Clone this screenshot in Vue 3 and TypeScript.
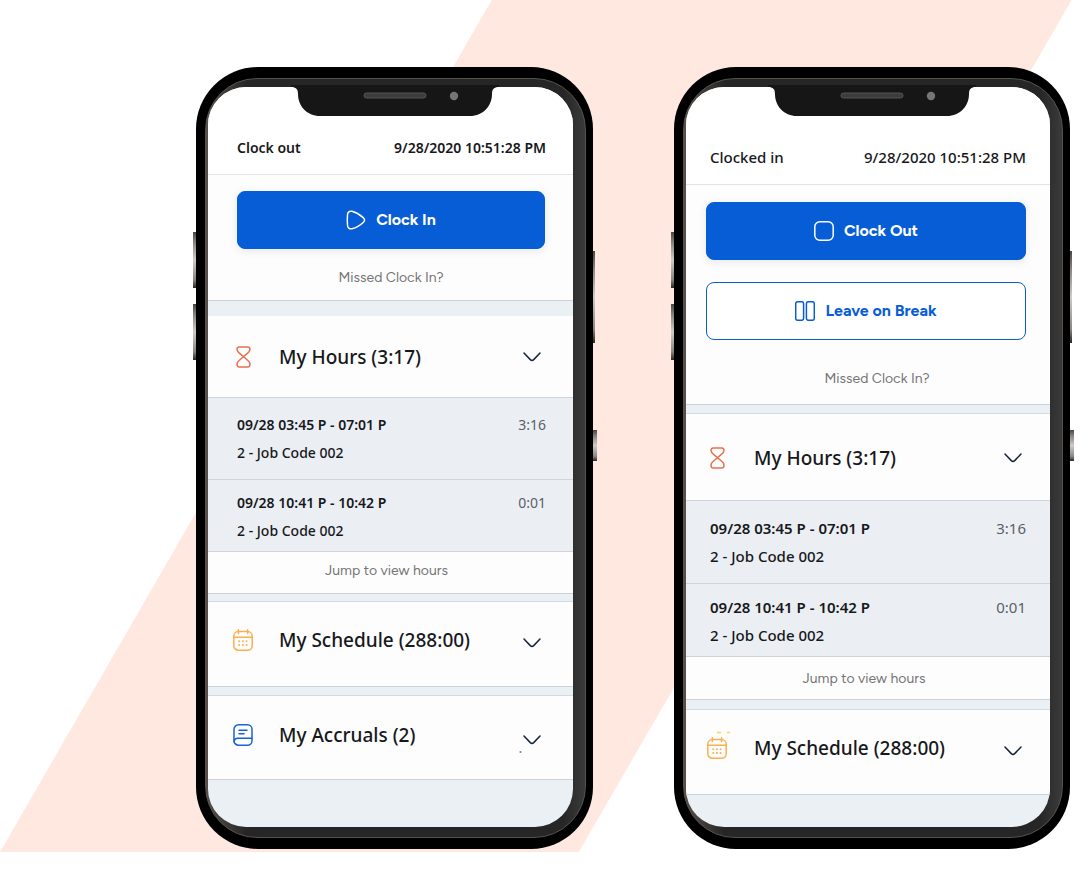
<script setup lang="ts">
import { reactive } from 'vue'

type IconName = 'hourglass' | 'calendar' | 'book'

interface Entry {
  span: string
  job: string
  total: string
}

interface Section {
  id: string
  icon: IconName
  title: string
  open: boolean
  entries: Entry[]
}

interface Phone {
  id: string
  status: string
  stamp: string
  action: string
  canBreak: boolean
  sections: Section[]
}

const entries: Entry[] = [
  { span: '09/28 03:45 P - 07:01 P', job: '2 - Job Code 002', total: '3:16' },
  { span: '09/28 10:41 P - 10:42 P', job: '2 - Job Code 002', total: '0:01' },
]

const hours = (): Section => ({ id: 'hours', icon: 'hourglass', title: 'My Hours (3:17)', open: true, entries })
const schedule = (): Section => ({ id: 'schedule', icon: 'calendar', title: 'My Schedule (288:00)', open: false, entries: [] })
const accruals = (): Section => ({ id: 'accruals', icon: 'book', title: 'My Accruals (2)', open: false, entries: [] })

const phones = reactive<Phone[]>([
  {
    id: 'out',
    status: 'Clock out',
    stamp: '9/28/2020 10:51:28 PM',
    action: 'Clock In',
    canBreak: false,
    sections: [hours(), schedule(), accruals()],
  },
  {
    id: 'in',
    status: 'Clocked in',
    stamp: '9/28/2020 10:51:28 PM',
    action: 'Clock Out',
    canBreak: true,
    sections: [hours(), schedule()],
  },
])
</script>

<template>
  <main class="page">
    <div v-for="phone in phones" :key="phone.id" class="phone" :class="'phone-' + phone.id">
      <i class="key key-up"></i>
      <i class="key key-down"></i>
      <i class="key key-power"></i>
      <i class="key key-side"></i>
      <div class="bezel">
        <svg class="notch" width="208" height="38" viewBox="0 0 208 38" aria-hidden="true">
          <path d="M0 6H208V8C203 8 201 10 201 15C201 27 192 37 179 37H29C16 37 7 27 7 15C7 10 5 8 0 8Z" fill="#161616" />
          <rect x="73" y="14" width="62" height="5" rx="2.5" fill="#3c3c3c" stroke="#555" stroke-width="1" />
          <circle cx="163" cy="17" r="4.2" fill="#757575" />
        </svg>
        <div class="screen">
          <header class="status">
            <span>{{ phone.status }}</span>
            <time>{{ phone.stamp }}</time>
          </header>

          <section class="actions">
            <button type="button" class="btn primary">
              <svg v-if="!phone.canBreak" width="20" height="20" viewBox="0 0 20 20" aria-hidden="true">
                <path d="M1.500 5C1.500 2.200 3.400.7 6 1.300C9.600 2.200 14.400 5 17.200 7.600C19 9.200 19 10.900 17.200 12.500C14.400 15.200 9.600 17.900 6 18.700C3.400 19.300 1.500 17.800 1.500 15C1.200 11.700 1.200 8.300 1.500 5Z" />
              </svg>
              <svg v-else width="20" height="20" viewBox="0 0 20 20" aria-hidden="true">
                <rect x="0.8" y="0.8" width="18.400" height="18.400" rx="5" />
              </svg>
              {{ phone.action }}
            </button>
            <button v-if="phone.canBreak" type="button" class="btn outline">
              <svg width="20" height="20" viewBox="0 0 20 20" aria-hidden="true">
                <rect x="0.700" y="0.700" width="7.900" height="18.600" rx="2" />
                <rect x="11.400" y="0.700" width="7.900" height="18.600" rx="2" />
              </svg>
              Leave on Break
            </button>
            <a class="missed" href="#missed">Missed Clock In?</a>
          </section>

          <section v-for="section in phone.sections" :key="section.id" class="card" :class="section.id">
            <button type="button" class="head" :aria-expanded="section.open" @click="section.open = !section.open">
              <span class="label">
                <span class="icon">
                  <svg v-if="section.icon === 'hourglass'" width="15" height="22" viewBox="0 0 15 22" stroke="#e5714f" aria-hidden="true">
                    <path d="M3.200 1h8.600c1.400 0 2.400 1 2.200 2.400-.2 1.600-1.200 3-2.600 4L3.600 14c-1.500 1.100-2.500 2.600-2.600 4.200C.9 19.800 1.800 21 3.200 21h8.600c1.400 0 2.300-1.200 2.200-2.800-.1-1.600-1.100-3.100-2.600-4.200L3.600 7.400c-1.400-1-2.400-2.400-2.600-4C.8 2 1.800 1 3.200 1z" />
                  </svg>
                  <svg v-else-if="section.icon === 'calendar'" width="20" height="22" viewBox="0 0 20 22" stroke="#f9b04f" aria-hidden="true">
                    <rect x="0.800" y="2.600" width="18.400" height="18.600" rx="4.500" />
                    <path d="M1 8.200H19M5.400.8V4.400M14.600.8V4.400" stroke-linecap="round" />
                    <path d="M6.200 12.300h.01M9.900 12.300h.01M13.600 12.300h.01M6.200 16h.01M9.900 16h.01M13.600 16h.01" stroke-linecap="round" stroke-width="2" />
                    <path v-if="phone.canBreak" d="M10 -4.500h4M20 -4.500h3" stroke="#fbdc3a" />
                  </svg>
                  <svg v-else width="20" height="22" viewBox="0 0 20 22" stroke="#1a62d6" aria-hidden="true">
                    <rect x="1" y="0.800" width="18" height="20.400" rx="4.500" />
                    <path d="M6 6.200H14M6 9.800H11M1 17.500C1.300 15.400 2.600 14.200 4.600 14.200H19" stroke-linecap="round" />
                  </svg>
                </span>
                <span class="title">{{ section.title }}</span>
              </span>
              <svg class="chevron" width="18" height="10" viewBox="0 0 18 10" aria-hidden="true">
                <path d="M1 1L7.300 7.600Q9 9.200 10.700 7.600L17 1" />
                <path v-if="section.id === 'accruals'" d="M-3 17h1" stroke-width="1" />
              </svg>
            </button>
            <template v-if="section.open">
              <div v-for="entry in section.entries" :key="entry.span" class="entry">
                <div>
                  <div class="span">{{ entry.span }}</div>
                  <div class="job">{{ entry.job }}</div>
                </div>
                <span class="total">{{ entry.total }}</span>
              </div>
              <a class="jump" href="#hours">Jump to view hours</a>
            </template>
          </section>
        </div>
      </div>
    </div>
  </main>
</template>

<style>
body {
  margin: 0;
  background: #fff;
}
</style>

<style scoped>
.page {
  position: relative;
  z-index: 0;
  box-sizing: border-box;
  min-height: 100vh;
  padding: 67px 0 35px;
  display: grid;
  grid-template-columns: 196fr 397fr 81fr 396fr 18fr;
  align-items: stretch;
  overflow: hidden;
  color: #17181b;
  font-family: "Noto Sans", "Open Sans", sans-serif;
}

.page::before {
  content: "";
  position: absolute;
  z-index: -1;
  inset: 0 0 32px;
  background: #ffe8e0;
  clip-path: polygon(45.2% 0, 98.5% 0, 53.2% 100%, 0 100%);
}

.phone {
  position: relative;
  display: flex;
  box-sizing: border-box;
  padding: 11px 7px 11px 9px;
  border-radius: 62px;
  background: #000;
}

.phone-out {
  grid-column: 2;
  --inset: 29px;
  --edge: 27px;
  --status-top: 51px;
  --status-end: 16px;
  --entry-end: 16px;
  --last-end: 10px;
  --text: 14px;
  --stamp-weight: 600;
}

.phone-in {
  grid-column: 4;
  --inset: 24px;
  --edge: 24px;
  --status-top: 60px;
  --status-end: 17px;
  --entry-end: 17px;
  --last-end: 11px;
  --text: 15px;
  --stamp-weight: 500;
}

.key {
  position: absolute;
  z-index: -1;
  width: 8px;
  background: linear-gradient(#4b4643, #8a8683 20%, #cfcbc8 50%, #8a8683 85%, #2a2624);
}

.key-up {
  left: -3px;
  top: 165px;
  height: 56px;
}

.key-down {
  left: -3px;
  top: 237px;
  height: 56px;
}

.key-power {
  right: -2px;
  top: 184px;
  height: 92px;
}

.key-side {
  right: -4px;
  top: 363px;
  height: 31px;
}

.bezel {
  position: relative;
  flex: 1;
  min-width: 0;
  display: flex;
  box-sizing: border-box;
  padding: 8px 12px 10px 2px;
  border: 1px solid #55524f;
  border-radius: 52px;
  background: linear-gradient(90deg, #5a504a 0, #262626 40px, #262626 94%, #3a3a3a);
}

.notch {
  position: absolute;
  top: 0;
  left: 50%;
  margin-left: -105px;
  pointer-events: none;
}

.screen {
  flex: 1;
  min-width: 0;
  border-radius: 38px;
  overflow: hidden;
  background: #ebf0f5;
}

.status {
  display: flex;
  justify-content: space-between;
  padding: var(--status-top) var(--edge) var(--status-end) var(--inset);
  border-bottom: 1px solid #e2e4e6;
  background: #fff;
  font-size: var(--text);
  line-height: 20px;
  font-weight: var(--stamp-weight);
}

.actions {
  display: flex;
  flex-direction: column;
  padding: 16px 28px 12px 29px;
  border-bottom: 1px solid #cdd2d8;
  background: #fdfdfe;
}

.phone-in .actions {
  padding: 17px 24px 15px 20px;
}

.btn {
  box-sizing: border-box;
  display: flex;
  align-items: center;
  justify-content: center;
  gap: 10px;
  padding: 18px;
  border: 1px solid #075dd5;
  border-radius: 8px;
  font-family: Figtree, Inter, sans-serif;
  font-size: 16px;
  line-height: 20px;
  font-weight: 700;
  cursor: pointer;
}

.btn svg {
  fill: none;
  stroke: currentColor;
  stroke-width: 1.5;
}

.primary {
  background: #075dd5;
  color: #fff;
  box-shadow: 0 2px 8px rgba(60, 40, 30, 0.1);
}

.outline {
  margin-top: 22px;
  background: #fff;
  color: #075dd5;
}

.missed,
.jump {
  color: #747474;
  font-family: Figtree, Inter, sans-serif;
  font-size: 14px;
  line-height: 20px;
  text-align: center;
  text-decoration: none;
}

.missed {
  margin-top: 19px;
}

.phone-in .missed {
  margin-top: 29px;
  padding-left: 22px;
}

.card {
  margin-top: 7px;
  border-top: 1px solid #d3dae2;
  border-bottom: 1px solid #cdd2d8;
  background: #fdfdfe;
}

.card.accruals,
.phone-in .card {
  margin-top: 8px;
}

.phone-out .card.hours {
  margin-top: 14px;
  border-top-color: #ebf0f5;
}

.phone-in .card.schedule {
  margin-top: 9px;
}

.head {
  box-sizing: border-box;
  width: 100%;
  display: flex;
  align-items: center;
  justify-content: space-between;
  padding: 24px 32px 26px 25px;
  border: 0;
  background: none;
  color: inherit;
  font: inherit;
  text-align: left;
  cursor: pointer;
}

.phone-in .head {
  padding-left: 21px;
  padding-right: 28px;
}

.accruals .head {
  padding-top: 25px;
  padding-bottom: 20px;
}

.hours .head {
  padding-top: 27px;
  padding-bottom: 26px;
}

.phone-in .hours .head {
  padding-top: 30px;
  padding-bottom: 28px;
}

.label {
  display: flex;
  align-items: center;
  gap: 26px;
  padding-bottom: 6px;
}

.phone-in .label {
  gap: 27px;
}

.accruals .label {
  padding-bottom: 10px;
}

.hours .label {
  padding-bottom: 0;
}

.icon {
  width: 20px;
  display: flex;
  justify-content: center;
}

.icon svg {
  fill: none;
  stroke-width: 1.5;
  overflow: visible;
}

.title {
  font-size: 19px;
  line-height: 28px;
  font-weight: 500;
}

.chevron {
  fill: none;
  stroke: #14233a;
  stroke-width: 1.5;
  stroke-linecap: round;
  overflow: visible;
}

.entry {
  display: flex;
  justify-content: space-between;
  padding: 13px var(--edge) var(--last-end) var(--inset);
  border-top: 1px solid #cfd4db;
  background: #ebeff4;
  font-size: var(--text);
  line-height: 20px;
}

.head + .entry {
  padding-top: 17px;
  padding-bottom: var(--entry-end);
}

.span {
  font-weight: 600;
}

.job {
  margin-top: 8px;
  font-weight: 500;
}

.total {
  color: #5c6066;
}

.jump {
  display: block;
  padding: 9px 8px 12px 0;
  border-top: 1px solid #cfd4db;
}

.phone-in .jump {
  padding: 12px 8px 10px 0;
}

.phone-out .screen {
  padding-bottom: 47px;
}
</style>
